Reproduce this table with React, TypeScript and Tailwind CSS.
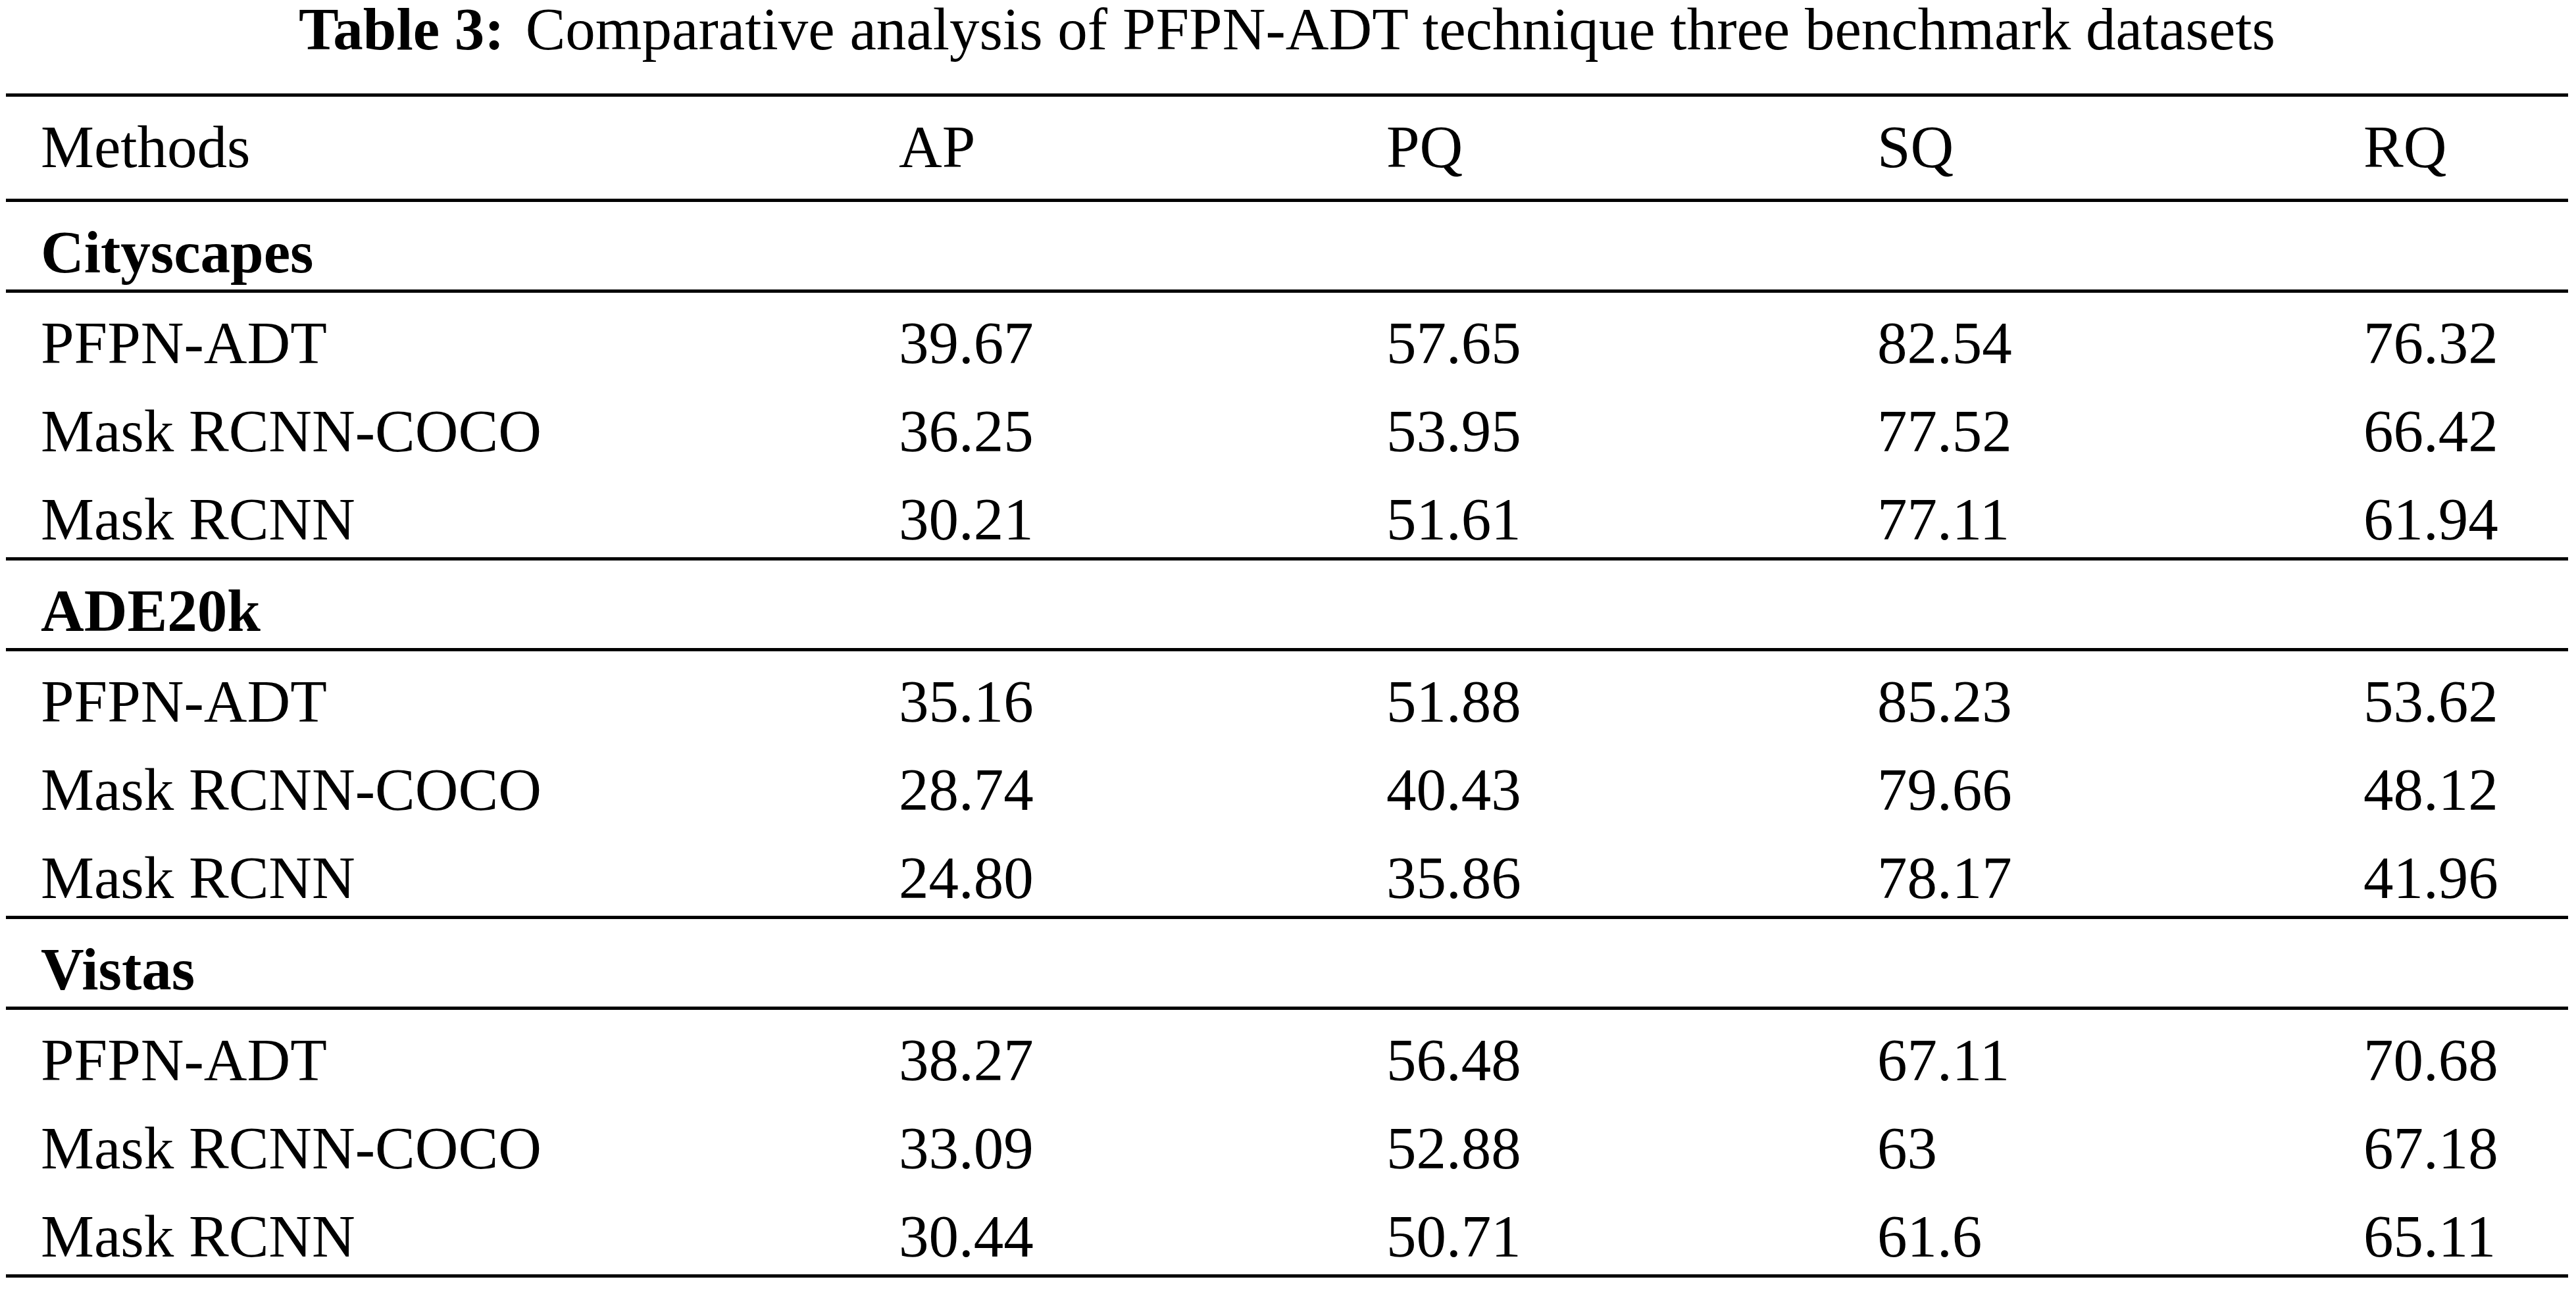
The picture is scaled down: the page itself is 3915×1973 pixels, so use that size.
import React from 'react';

type Row = { method: string; ap: string; pq: string; sq: string; rq: string };

const sections: { name: string; rows: Row[] }[] = [
  {
    name: 'Cityscapes',
    rows: [
      { method: 'PFPN-ADT', ap: '39.67', pq: '57.65', sq: '82.54', rq: '76.32' },
      { method: 'Mask RCNN-COCO', ap: '36.25', pq: '53.95', sq: '77.52', rq: '66.42' },
      { method: 'Mask RCNN', ap: '30.21', pq: '51.61', sq: '77.11', rq: '61.94' },
    ],
  },
  {
    name: 'ADE20k',
    rows: [
      { method: 'PFPN-ADT', ap: '35.16', pq: '51.88', sq: '85.23', rq: '53.62' },
      { method: 'Mask RCNN-COCO', ap: '28.74', pq: '40.43', sq: '79.66', rq: '48.12' },
      { method: 'Mask RCNN', ap: '24.80', pq: '35.86', sq: '78.17', rq: '41.96' },
    ],
  },
  {
    name: 'Vistas',
    rows: [
      { method: 'PFPN-ADT', ap: '38.27', pq: '56.48', sq: '67.11', rq: '70.68' },
      { method: 'Mask RCNN-COCO', ap: '33.09', pq: '52.88', sq: '63', rq: '67.18' },
      { method: 'Mask RCNN', ap: '30.44', pq: '50.71', sq: '61.6', rq: '65.11' },
    ],
  },
];

const cols = 'grid grid-cols-[1304px_741px_746px_739px_1fr]';

const Rule = () => <div className="h-[5px] bg-black" />;

const Cells = ({ values, height }: { values: string[]; height: string }) => (
  <div className={`${cols} ${height}`}>
    {values.map((v, i) => (
      <div key={i} className="pl-[53px] pt-[32px] leading-[90px] whitespace-nowrap">
        {v}
      </div>
    ))}
  </div>
);

export default function App() {
  return (
    <div className="w-[3915px] h-[1973px] bg-white text-black font-['Liberation_Serif',serif] text-[91px]">
      <div className="ml-[9px] w-[3894px]">
        {/* Caption */}
        <div className="h-[142px] leading-[90px] text-center whitespace-nowrap">
          <span className="font-bold">Table 3:</span>
          <span className="ml-[32px]">Comparative analysis of PFPN-ADT technique three benchmark datasets</span>
        </div>

        <Rule />
        <Cells values={['Methods', 'AP', 'PQ', 'SQ', 'RQ']} height="h-[155px]" />
        <Rule />

        {sections.map((s, si) => (
          <div key={s.name}>
            <div className="h-[133px] pl-[53px] pt-[32px] leading-[90px] font-bold">{s.name}</div>
            <Rule />
            {s.rows.map((r) => (
              <Cells key={r.method} values={[r.method, r.ap, r.pq, r.sq, r.rq]} height="h-[134px]" />
            ))}
            {si < sections.length - 1 && <Rule />}
          </div>
        ))}
        <Rule />
      </div>
    </div>
  );
}
